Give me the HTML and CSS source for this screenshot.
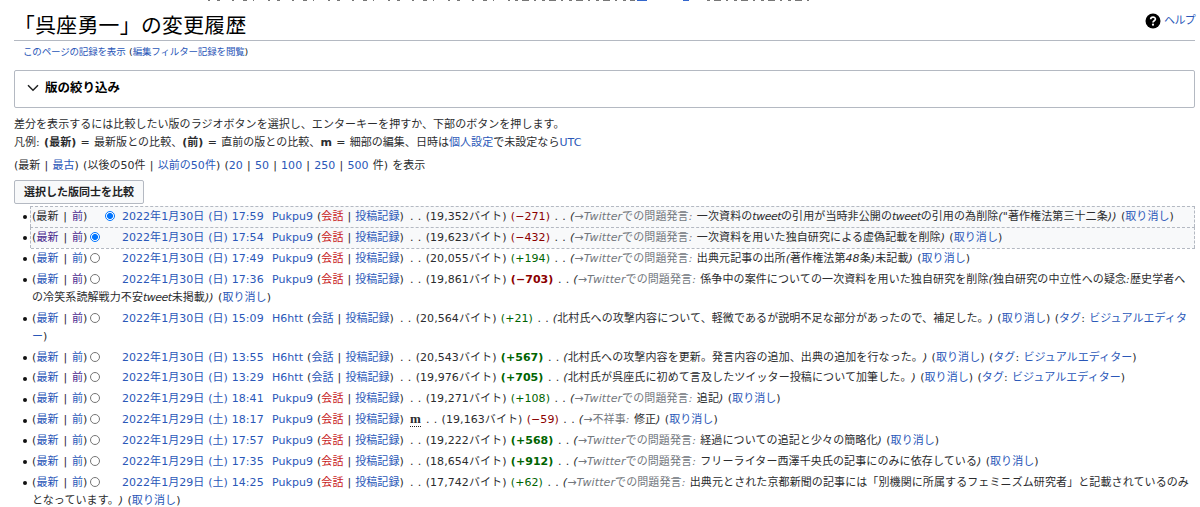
FILE: index.html
```
<!DOCTYPE html>
<html lang="ja">
<head>
<meta charset="utf-8">
<title>「呉座勇一」の変更履歴</title>
<link rel="stylesheet" href="styles.css">
</head>
<body>
<svg class="notice" width="610" height="1" viewBox="0 0 610 1"><path stroke="#777" stroke-dasharray="2 7 3 12 2 9 4 6 1 14" d="M3 .5H310"/><path stroke="#777" stroke-dasharray="3 4 7 5 2 6" d="M310 .5H430M502 .5H604"/><path stroke="#36c" d="M432 .5H442M478 .5H484"/></svg>
<header class="head">
<h1>「呉座勇一」の変更履歴</h1>
<div class="help"><svg width="16" height="16" viewBox="0 0 16 16"><circle cx="8" cy="8" r="7.5"/><path d="M5.7 6.3C5.7 3.4 10.4 3.5 10.4 6.1C10.4 7.9 8 7.7 8 9.6" fill="none" stroke="#fff" stroke-width="1.7"/><circle cx="8" cy="11.7" r="1.1" fill="#fff"/></svg><a>ヘルプ</a></div>
</header>
<div class="sub"><a>このページの記録を表示</a> (<a>編集フィルター記録を閲覧</a>)</div>
<section class="filter"><svg width="12" height="8" viewBox="0 0 12 8"><path d="M1 1.2L6 6.2L11 1.2" fill="none" stroke="#202122" stroke-width="1.5"/></svg><b>版の絞り込み</b></section>
<p class="intro">差分を表示するには比較したい版のラジオボタンを選択し、エンターキーを押すか、下部のボタンを押します。<br>凡例: <b>(最新)</b> = 最新版との比較、<b>(前)</b> = 直前の版との比較、<b>m</b> = 細部の編集、日時は<a>個人設定</a>で未設定なら<a>UTC</a></p>
<p class="pager">(最新 | <a>最古</a>) (以後の50件 | <a>以前の50件</a>) (<a>20</a> | <a>50</a> | <a>100</a> | <a>250</a> | <a>500</a> 件) を表示</p>
<button class="compare">選択した版同士を比較</button>
<ul class="history">
<li class="sel"><span class="pick">(最新 | <a class="v">前</a>)<i class="radio on second"></i></span><a class="date">2022年1月30日 (日) 17:59</a><span class="user"><a>Pukpu9</a> (<a class="new">会話</a> | <a>投稿記録</a>)</span><span class="size">. . (19,352バイト) <span class="neg">(−271)</span></span><span class="dots">. .</span><em>(<span class="auto">→Twitterでの問題発言: </span>一次資料の<span class="lat">tweet</span>の引用が当時非公開の<span class="lat">tweet</span>の引用の為削除("著作権法第三十二条))</em> (<a>取り消し</a>)</li>
<li class="sel"><span class="pick">(<a class="v">最新</a> | <a class="v">前</a>)<i class="radio on"></i></span><a class="date">2022年1月30日 (日) 17:54</a><span class="user"><a>Pukpu9</a> (<a class="new">会話</a> | <a>投稿記録</a>)</span><span class="size">. . (19,623バイト) <span class="neg">(−432)</span></span><span class="dots">. .</span><em>(<span class="auto">→Twitterでの問題発言: </span>一次資料を用いた独自研究による虚偽記載を削除)</em> (<a>取り消し</a>)</li>
<li><span class="pick">(<a>最新</a> | <a>前</a>)<i class="radio"></i></span><a class="date">2022年1月30日 (日) 17:49</a><span class="user"><a>Pukpu9</a> (<a class="new">会話</a> | <a>投稿記録</a>)</span><span class="size">. . (20,055バイト) <span class="pos">(+194)</span></span><span class="dots">. .</span><em>(<span class="auto">→Twitterでの問題発言: </span>出典元記事の出所(著作権法第48条)未記載)</em> (<a>取り消し</a>)</li>
<li><span class="pick">(<a>最新</a> | <a class="v">前</a>)<i class="radio"></i></span><a class="date">2022年1月30日 (日) 17:36</a><span class="user"><a>Pukpu9</a> (<a class="new">会話</a> | <a>投稿記録</a>)</span><span class="size">. . (19,861バイト) <b class="neg">(−703)</b></span><span class="dots">. .</span><em>(<span class="auto">→Twitterでの問題発言: </span>係争中の案件についての一次資料を用いた独自研究を削除(独自研究の中立性への疑念:歴史学者へ<br>の冷笑系読解戦力不安<span class="lat">tweet</span>未掲載))</em> (<a>取り消し</a>)</li>
<li><span class="pick">(<a>最新</a> | <a class="v">前</a>)<i class="radio"></i></span><a class="date">2022年1月30日 (日) 15:09</a><span class="user ip"><a>H6htt</a> (<a>会話</a> | <a>投稿記録</a>)</span><span class="size">. . (20,564バイト) <span class="pos">(+21)</span></span><span class="dots">. .</span><em>(北村氏への攻撃内容について、軽微であるが説明不足な部分があったので、補足した。)</em> (<a>取り消し</a>) (<a>タグ</a>: <a>ビジュアルエディタ<br>ー</a>)</li>
<li><span class="pick">(<a>最新</a> | <a>前</a>)<i class="radio"></i></span><a class="date">2022年1月30日 (日) 13:55</a><span class="user ip"><a>H6htt</a> (<a>会話</a> | <a>投稿記録</a>)</span><span class="size">. . (20,543バイト) <b class="pos">(+567)</b></span><span class="dots">. .</span><em>(北村氏への攻撃内容を更新。発言内容の追加、出典の追加を行なった。)</em> (<a>取り消し</a>) (<a>タグ</a>: <a>ビジュアルエディター</a>)</li>
<li><span class="pick">(<a>最新</a> | <a class="v">前</a>)<i class="radio"></i></span><a class="date">2022年1月30日 (日) 13:29</a><span class="user ip"><a>H6htt</a> (<a>会話</a> | <a>投稿記録</a>)</span><span class="size">. . (19,976バイト) <b class="pos">(+705)</b></span><span class="dots">. .</span><em>(北村氏が呉座氏に初めて言及したツイッター投稿について加筆した。)</em> (<a>取り消し</a>) (<a>タグ</a>: <a>ビジュアルエディター</a>)</li>
<li><span class="pick">(<a>最新</a> | <a>前</a>)<i class="radio"></i></span><a class="date">2022年1月29日 (土) 18:41</a><span class="user"><a>Pukpu9</a> (<a class="new">会話</a> | <a>投稿記録</a>)</span><span class="size">. . (19,271バイト) <span class="pos">(+108)</span></span><span class="dots">. .</span><em>(<span class="auto">→Twitterでの問題発言: </span>追記)</em> (<a>取り消し</a>)</li>
<li><span class="pick">(<a>最新</a> | <a>前</a>)<i class="radio"></i></span><a class="date">2022年1月29日 (土) 18:17</a><span class="user"><a>Pukpu9</a> (<a class="new">会話</a> | <a>投稿記録</a>)</span><span class="minor">m</span><span class="size">. . (19,163バイト) <span class="neg">(−59)</span></span><span class="dots">. .</span><em>(<span class="auto">→不祥事: </span>修正)</em> (<a>取り消し</a>)</li>
<li><span class="pick">(<a>最新</a> | <a>前</a>)<i class="radio"></i></span><a class="date">2022年1月29日 (土) 17:57</a><span class="user"><a>Pukpu9</a> (<a class="new">会話</a> | <a>投稿記録</a>)</span><span class="size">. . (19,222バイト) <b class="pos">(+568)</b></span><span class="dots">. .</span><em>(<span class="auto">→Twitterでの問題発言: </span>経過についての追記と少々の簡略化)</em> (<a>取り消し</a>)</li>
<li><span class="pick">(<a>最新</a> | <a>前</a>)<i class="radio"></i></span><a class="date">2022年1月29日 (土) 17:35</a><span class="user"><a>Pukpu9</a> (<a class="new">会話</a> | <a>投稿記録</a>)</span><span class="size">. . (18,654バイト) <b class="pos">(+912)</b></span><span class="dots">. .</span><em>(<span class="auto">→Twitterでの問題発言: </span>フリーライター西澤千央氏の記事にのみに依存している)</em> (<a>取り消し</a>)</li>
<li><span class="pick">(<a>最新</a> | <a>前</a>)<i class="radio"></i></span><a class="date">2022年1月29日 (土) 14:25</a><span class="user"><a>Pukpu9</a> (<a class="new">会話</a> | <a>投稿記録</a>)</span><span class="size">. . (17,742バイト) <span class="pos">(+62)</span></span><span class="dots">. .</span><em>(<span class="auto">→Twitterでの問題発言: </span>出典元とされた京都新聞の記事には「別機関に所属するフェミニズム研究者」と記載されているのみ<br>となっています。)</em> (<a>取り消し</a>)</li>
</ul>
</body>
</html>
```
FILE: styles.css
```
* { box-sizing: border-box; }
body { margin: 0; height: 507px; overflow: hidden; padding: 0 5px 0 14px; background: #fff; color: #2b2c2e; font: 11px/18px "DejaVu Sans", "Noto Sans CJK JP", sans-serif; white-space: nowrap; font-synthesis-style: none; text-spacing-trim: space-all; letter-spacing: .04px; word-spacing: .7px; }
a { color: #2a57b8; }
.v { color: #4a2b8f; }
.new { color: #c8231c; }
.notice { display: block; margin-left: 191px; }
.head { height: 40px; display: flex; justify-content: space-between; border-bottom: 1px solid #b4b9c2; }
h1 { margin: 7px 0 0; font: 400 20.8px/32px "Noto Sans CJK JP", sans-serif; color: #000; letter-spacing: .35px; }
.help { display: flex; gap: 3px; padding-top: 12px; height: 28px; letter-spacing: -.7px; line-height: 16px; }
.sub { padding-left: 9px; margin-top: 2px; font-size: 9.5px; line-height: 17px; letter-spacing: -.16px; }
.filter { margin-top: 10px; height: 38px; border: 1px solid #b4b9c2; border-radius: 2px; display: flex; align-items: center; gap: 6px; padding: 0 0 3px 12px; font-size: 12.5px; color: #000; }
.filter b { letter-spacing: 0; }
p { margin: 0; }
.intro { margin-top: 8px; }
.pager { margin-top: 5px; word-spacing: .62px; }
.compare { display: block; margin: 5px 0 0; width: 130px; height: 24px; padding: 0 0 2px; border: 1px solid #b4b9c2; border-radius: 2px; background: #f8f9fa; color: #202122; font: bold 11px/18px "Noto Sans CJK JP", sans-serif; }
.history { margin: 2px 0 0; padding: 0 0 0 17px; list-style: none; letter-spacing: .07px; }
li { position: relative; height: auto; margin-bottom: 1.3px; padding: .7px 0 .65px 1px; line-height: 18.2px; }
li::before { content: ""; position: absolute; left: -8px; top: 8.2px; width: 4px; height: 4px; border-radius: 50%; background: #111; }
li.sel { margin: 0 0 0 -1px; height: 21px; border: 1px dashed #b4b9c2; border-bottom: 0; background: #f8f9fa; padding-left: 1px; }
li.sel + li:not(.sel) { border-top: 1px dashed #b4b9c2; }
.pick { display: inline-block; width: 90px; word-spacing: 1.3px; }
.radio { display: inline-block; width: 10px; height: 10px; margin-left: 3px; border: 1px solid #767676; border-radius: 50%; background: #fff; vertical-align: -1px; }
.radio.on { border: 1px solid #0075ff; background: radial-gradient(circle, #0075ff 0 2.7px, #fff 3.3px); }
.radio.second { margin-left: 18px; }
.date { display: inline-block; width: 150px; letter-spacing: .03px; word-spacing: .4px; }
.user { display: inline-block; width: 138px; letter-spacing: .04px; word-spacing: .5px; }
.user.ip { width: 128px; }
.size { margin-right: 4.5px; }
.dots { margin-right: 4px; }
em { letter-spacing: .1px; }
.neg { color: #8b0000; }
.pos { color: #006400; }
.auto { color: #72777d; }
.lat { letter-spacing: -.5px; }
.minor { font: bold 13px/12px "Liberation Serif", serif; border-bottom: 1px dotted #202122; margin-right: 5px; }
```
